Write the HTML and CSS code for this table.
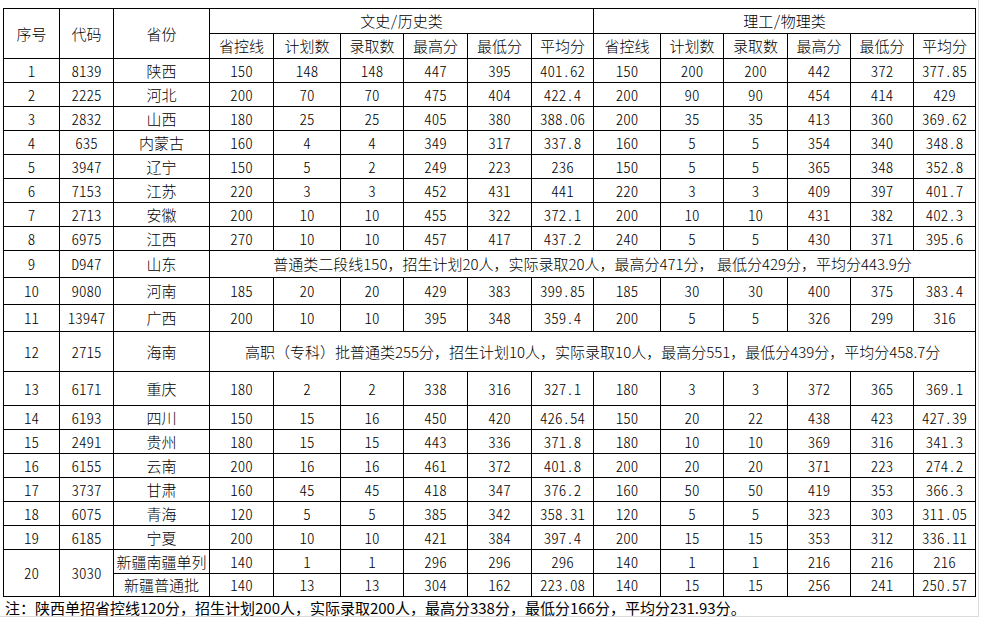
FILE: index.html
```html
<!DOCTYPE html>
<html lang="zh-CN">
<head>
<meta charset="utf-8">
<link rel="stylesheet" href="styles.css">
</head>
<body>
<div class="sheet">
<table class="grid">
<colgroup>
<col style="width:56px"><col style="width:54px"><col style="width:96px"><col style="width:64px"><col style="width:67px"><col style="width:63px"><col style="width:64px"><col style="width:64px"><col style="width:62px"><col style="width:67px"><col style="width:63px"><col style="width:64px"><col style="width:63px"><col style="width:63px"><col style="width:62px">
</colgroup>
<tr class="h25"><td rowspan="2">序号</td><td rowspan="2">代码</td><td rowspan="2">省份</td><td colspan="6">文史/历史类</td><td colspan="6">理工/物理类</td></tr>
<tr class="h25"><td>省控线</td><td>计划数</td><td>录取数</td><td>最高分</td><td>最低分</td><td>平均分</td><td>省控线</td><td>计划数</td><td>录取数</td><td>最高分</td><td>最低分</td><td>平均分</td></tr>
<tr class="h24"><td>1</td><td>8139</td><td>陕西</td><td>150</td><td>148</td><td>148</td><td>447</td><td>395</td><td>401.62</td><td>150</td><td>200</td><td>200</td><td>442</td><td>372</td><td>377.85</td></tr>
<tr class="h24"><td>2</td><td>2225</td><td>河北</td><td>200</td><td>70</td><td>70</td><td>475</td><td>404</td><td>422.4</td><td>200</td><td>90</td><td>90</td><td>454</td><td>414</td><td>429</td></tr>
<tr class="h24"><td>3</td><td>2832</td><td>山西</td><td>180</td><td>25</td><td>25</td><td>405</td><td>380</td><td>388.06</td><td>200</td><td>35</td><td>35</td><td>413</td><td>360</td><td>369.62</td></tr>
<tr class="h24"><td>4</td><td>635</td><td>内蒙古</td><td>160</td><td>4</td><td>4</td><td>349</td><td>317</td><td>337.8</td><td>160</td><td>5</td><td>5</td><td>354</td><td>340</td><td>348.8</td></tr>
<tr class="h24"><td>5</td><td>3947</td><td>辽宁</td><td>150</td><td>5</td><td>2</td><td>249</td><td>223</td><td>236</td><td>150</td><td>5</td><td>5</td><td>365</td><td>348</td><td>352.8</td></tr>
<tr class="h24"><td>6</td><td>7153</td><td>江苏</td><td>220</td><td>3</td><td>3</td><td>452</td><td>431</td><td>441</td><td>220</td><td>3</td><td>3</td><td>409</td><td>397</td><td>401.7</td></tr>
<tr class="h24"><td>7</td><td>2713</td><td>安徽</td><td>200</td><td>10</td><td>10</td><td>455</td><td>322</td><td>372.1</td><td>200</td><td>10</td><td>10</td><td>431</td><td>382</td><td>402.3</td></tr>
<tr class="h24"><td>8</td><td>6975</td><td>江西</td><td>270</td><td>10</td><td>10</td><td>457</td><td>417</td><td>437.2</td><td>240</td><td>5</td><td>5</td><td>430</td><td>371</td><td>395.6</td></tr>
<tr class="h27"><td>9</td><td>D947</td><td>山东</td><td class="span" colspan="12">普通类二段线150，招生计划20人，实际录取20人，最高分471分， 最低分429分，平均分443.9分</td></tr>
<tr class="h27"><td>10</td><td>9080</td><td>河南</td><td>185</td><td>20</td><td>20</td><td>429</td><td>383</td><td>399.85</td><td>185</td><td>30</td><td>30</td><td>400</td><td>375</td><td>383.4</td></tr>
<tr class="h27"><td>11</td><td>13947</td><td>广西</td><td>200</td><td>10</td><td>10</td><td>395</td><td>348</td><td>359.4</td><td>200</td><td>5</td><td>5</td><td>326</td><td>299</td><td>316</td></tr>
<tr class="h40"><td>12</td><td>2715</td><td>海南</td><td class="span" colspan="12">高职（专科）批普通类255分，招生计划10人，实际录取10人，最高分551，最低分439分，平均分458.7分</td></tr>
<tr class="h34"><td>13</td><td>6171</td><td>重庆</td><td>180</td><td>2</td><td>2</td><td>338</td><td>316</td><td>327.1</td><td>180</td><td>3</td><td>3</td><td>372</td><td>365</td><td>369.1</td></tr>
<tr class="h24"><td>14</td><td>6193</td><td>四川</td><td>150</td><td>15</td><td>16</td><td>450</td><td>420</td><td>426.54</td><td>150</td><td>20</td><td>22</td><td>438</td><td>423</td><td>427.39</td></tr>
<tr class="h24"><td>15</td><td>2491</td><td>贵州</td><td>180</td><td>15</td><td>15</td><td>443</td><td>336</td><td>371.8</td><td>180</td><td>10</td><td>10</td><td>369</td><td>316</td><td>341.3</td></tr>
<tr class="h24"><td>16</td><td>6155</td><td>云南</td><td>200</td><td>16</td><td>16</td><td>461</td><td>372</td><td>401.8</td><td>200</td><td>20</td><td>20</td><td>371</td><td>223</td><td>274.2</td></tr>
<tr class="h24"><td>17</td><td>3737</td><td>甘肃</td><td>160</td><td>45</td><td>45</td><td>418</td><td>347</td><td>376.2</td><td>160</td><td>50</td><td>50</td><td>419</td><td>353</td><td>366.3</td></tr>
<tr class="h24"><td>18</td><td>6075</td><td>青海</td><td>120</td><td>5</td><td>5</td><td>385</td><td>342</td><td>358.31</td><td>120</td><td>5</td><td>5</td><td>323</td><td>303</td><td>311.05</td></tr>
<tr class="h24"><td>19</td><td>6185</td><td>宁夏</td><td>200</td><td>10</td><td>10</td><td>421</td><td>384</td><td>397.4</td><td>200</td><td>15</td><td>15</td><td>353</td><td>312</td><td>336.11</td></tr>
<tr class="h24"><td rowspan="2">20</td><td rowspan="2">3030</td><td>新疆南疆单列</td><td>140</td><td>1</td><td>1</td><td>296</td><td>296</td><td>296</td><td>140</td><td>1</td><td>1</td><td>216</td><td>216</td><td>216</td></tr>
<tr class="h23"><td>新疆普通批</td><td>140</td><td>13</td><td>13</td><td>304</td><td>162</td><td>223.08</td><td>140</td><td>15</td><td>15</td><td>256</td><td>241</td><td>250.57</td></tr>
</table>
<p class="note">注：陕西单招省控线120分，招生计划200人，实际录取200人，最高分338分，最低分166分，平均分231.93分。</p>
</div>
</body>
</html>
```

FILE: styles.css
```css
html, body {
  margin: 0;
  padding: 0;
  background: #ffffff;
}
body {
  width: 982px;
  height: 619px;
  overflow: hidden;
}
.sheet {
  width: 979px;
  height: 617px;
  padding: 8px 0 0 3px;
  box-sizing: border-box;
  border-right: 1px solid #dcdcdc;
  border-bottom: 1px solid #dcdcdc;
}
.grid {
  border-collapse: collapse;
  table-layout: fixed;
  width: 973px;
  font-family: "Noto Sans CJK SC", sans-serif;
  font-feature-settings: "hwid" 1;
  font-weight: 300;
  font-size: 15px;
  color: #000;
}
.grid td {
  border: 1px solid #000;
  padding: 0;
  text-align: center;
  vertical-align: middle;
  white-space: nowrap;
  line-height: 18px;
  overflow: hidden;
}
.grid td.span {
  font-feature-settings: normal;
}
.h25 { height: 25px; }
.h24 { height: 24px; }
.h23 { height: 23px; }
.h27 { height: 27px; }
.h34 { height: 34px; }
.h40 { height: 40px; }
.note {
  margin: 0;
  padding-left: 2px;
  font-family: "Noto Sans CJK SC", sans-serif;
  font-size: 15px;
  line-height: 22px;
  color: #000;
}
```
